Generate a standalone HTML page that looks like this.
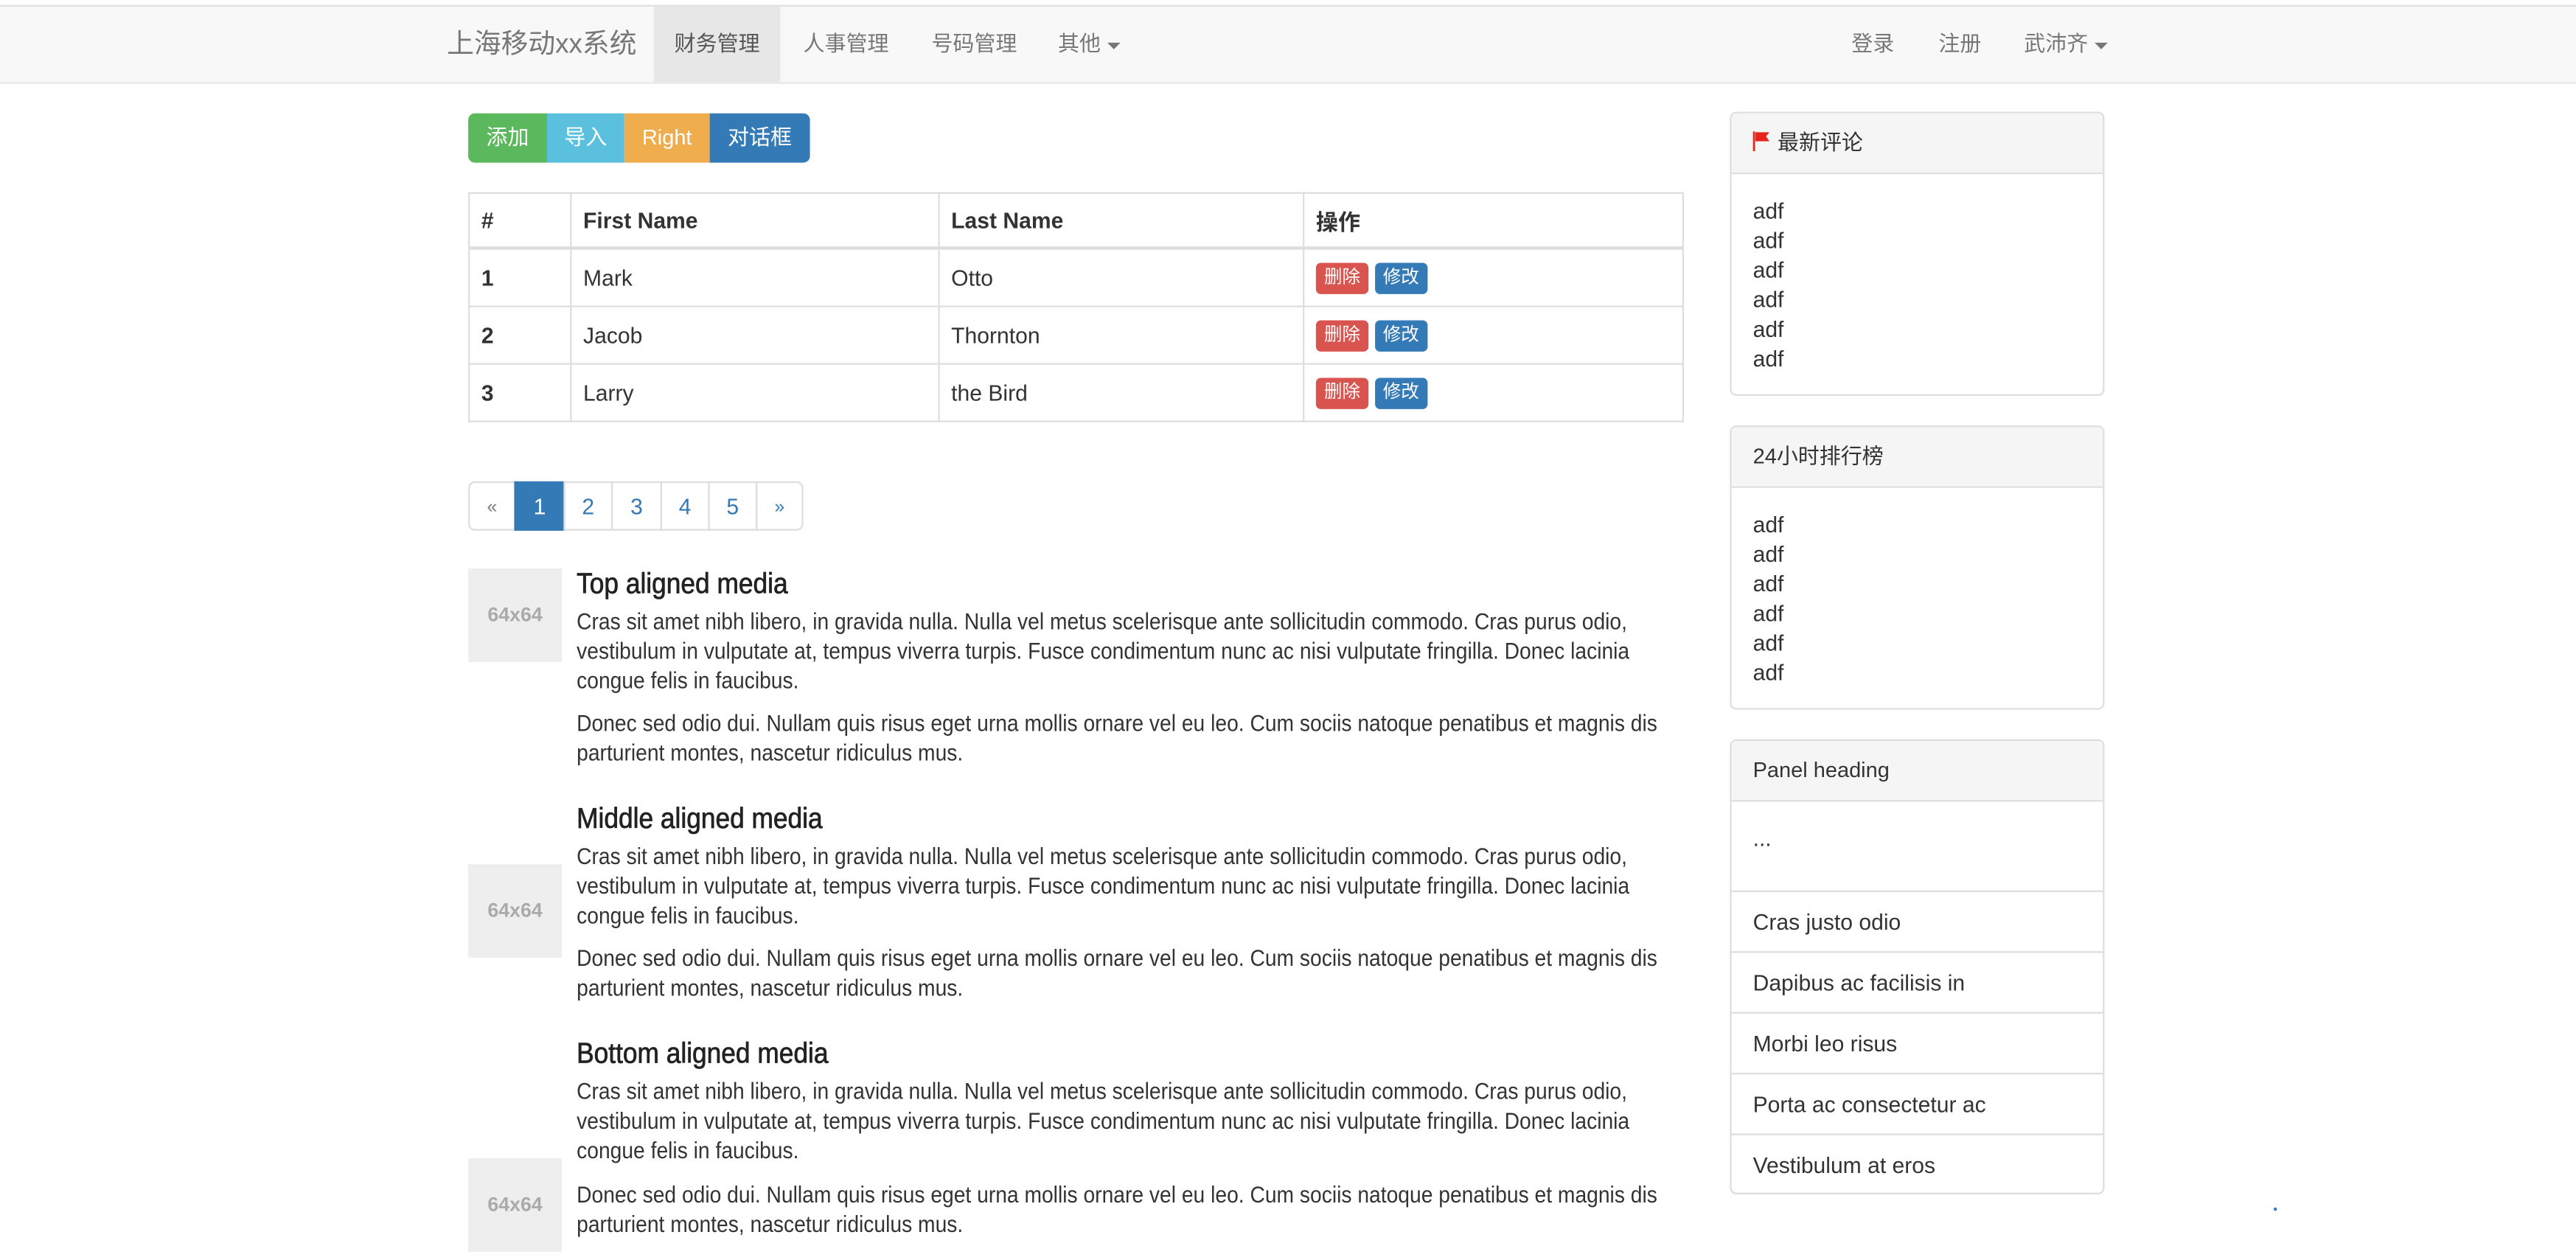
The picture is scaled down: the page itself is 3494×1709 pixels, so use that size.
<!DOCTYPE html>
<html><head><meta charset="utf-8">
<style>
html,body{margin:0;padding:0;background:#fff;overflow:hidden;width:3494px;height:1708px}
#w{position:absolute;left:0;top:0;width:1568px;height:767px;transform:scale(2.2283);transform-origin:0 0;font-family:"Liberation Sans","Noto Sans CJK SC",sans-serif;font-size:14px;color:#333}
.a{position:absolute;white-space:nowrap}
.c{display:inline-block;transform:scaleX(.905);transform-origin:left center}
.nav{position:absolute;left:0;top:3px;width:1568px;height:46px;background:#f8f8f8;border-top:1px solid #e0e0e0;border-bottom:1px solid #e7e7e7}
.ni{position:absolute;top:0;height:46px;line-height:46px;color:#777;font-size:13px}
.caret{display:inline-block;width:0;height:0;border-left:4px solid transparent;border-right:4px solid transparent;border-top:4px solid #777;vertical-align:middle;margin-left:4px}
.btn{position:absolute;top:69px;height:30px;line-height:30px;color:#fff;text-align:center;font-size:13px}
table{position:absolute;left:285px;top:117px;width:740px;border-collapse:collapse}
td,th{border:1px solid #ddd;padding:0 7px;text-align:left;height:34px;font-size:13.5px}
th{border-bottom:2px solid #ddd;height:32px}
.sb{display:inline-block;color:#fff;font-size:11px;height:19px;line-height:19px;padding:0 5px;border-radius:3px;vertical-align:middle}
.pg{position:absolute;top:293px;height:30px;line-height:30px;text-align:center;color:#337ab7;border:1px solid #ddd;box-sizing:border-box;font-size:13.5px}
.img{position:absolute;left:285px;width:57px;height:57px;background:#eee;color:#aaa;font-weight:bold;font-size:12px;text-align:center;line-height:57px}
.h{position:absolute;left:351px;font-size:17.5px;color:#222;white-space:nowrap;-webkit-text-stroke:0.35px #222}
.p{position:absolute;left:351px;line-height:18px;white-space:nowrap;font-size:14px}
.panel{position:absolute;left:1053px;width:228px;border:1px solid #ddd;border-radius:4px;box-sizing:border-box;background:#fff;font-size:13.5px}
.ph{height:36px;line-height:36px;background:#f5f5f5;border-bottom:1px solid #ddd;padding-left:13px;border-radius:4px 4px 0 0;font-size:13px}
.li{height:37px;line-height:37px;border-top:1px solid #ddd;padding-left:13px;box-sizing:border-box}
</style></head><body><div id="w">
<div class="nav">
 <div class="ni" style="left:272px;font-size:16.5px">上海移动xx系统</div>
 <div class="ni" style="left:398px;width:77px;background:#e7e7e7;color:#555;text-align:center">财务管理</div>
 <div class="ni" style="left:489px">人事管理</div>
 <div class="ni" style="left:567px">号码管理</div>
 <div class="ni" style="left:644px">其他<span class="caret"></span></div>
 <div class="ni" style="left:1127px">登录</div>
 <div class="ni" style="left:1180px">注册</div>
 <div class="ni" style="left:1232px">武沛齐<span class="caret"></span></div>
</div>
<div class="btn" style="left:285px;width:48px;background:#5cb85c;border-radius:4px 0 0 4px">添加</div>
<div class="btn" style="left:333px;width:47px;background:#5bc0de">导入</div>
<div class="btn" style="left:380px;width:52px;background:#f0ad4e">Right</div>
<div class="btn" style="left:432px;width:61px;background:#337ab7;border-radius:0 4px 4px 0">对话框</div>
<table>
<tr><th style="width:47px">#</th><th style="width:209px">First Name</th><th style="width:207px">Last Name</th><th>操作</th></tr>
<tr><td><b>1</b></td><td>Mark</td><td>Otto</td><td><span class="sb" style="background:#d9534f">删除</span> <span class="sb" style="background:#337ab7">修改</span></td></tr>
<tr><td><b>2</b></td><td>Jacob</td><td>Thornton</td><td><span class="sb" style="background:#d9534f">删除</span> <span class="sb" style="background:#337ab7">修改</span></td></tr>
<tr><td><b>3</b></td><td>Larry</td><td>the Bird</td><td><span class="sb" style="background:#d9534f">删除</span> <span class="sb" style="background:#337ab7">修改</span></td></tr>
</table>
<div class="pg" style="left:285px;width:29px;border-radius:4px 0 0 4px;color:#777;font-size:11px">«</div>
<div class="pg" style="left:313px;width:31px;background:#337ab7;border-color:#337ab7;color:#fff">1</div>
<div class="pg" style="left:343px;width:30px">2</div>
<div class="pg" style="left:372px;width:31px">3</div>
<div class="pg" style="left:402px;width:30px">4</div>
<div class="pg" style="left:431px;width:30px">5</div>
<div class="pg" style="left:460px;width:29px;border-radius:0 4px 4px 0;font-size:11px">»</div>

<div class="img" style="top:346px">64x64</div>
<div class="h" style="top:345px"><span class="c">Top aligned media</span></div>
<div class="p" style="top:369px"><span class="c">Cras sit amet nibh libero, in gravida nulla. Nulla vel metus scelerisque ante sollicitudin commodo. Cras purus odio,</span><br><span class="c">vestibulum in vulputate at, tempus viverra turpis. Fusce condimentum nunc ac nisi vulputate fringilla. Donec lacinia</span><br><span class="c">congue felis in faucibus.</span></div>
<div class="p" style="top:431px"><span class="c">Donec sed odio dui. Nullam quis risus eget urna mollis ornare vel eu leo. Cum sociis natoque penatibus et magnis dis</span><br><span class="c">parturient montes, nascetur ridiculus mus.</span></div>

<div class="img" style="top:526px">64x64</div>
<div class="h" style="top:488px"><span class="c">Middle aligned media</span></div>
<div class="p" style="top:512px"><span class="c">Cras sit amet nibh libero, in gravida nulla. Nulla vel metus scelerisque ante sollicitudin commodo. Cras purus odio,</span><br><span class="c">vestibulum in vulputate at, tempus viverra turpis. Fusce condimentum nunc ac nisi vulputate fringilla. Donec lacinia</span><br><span class="c">congue felis in faucibus.</span></div>
<div class="p" style="top:574px"><span class="c">Donec sed odio dui. Nullam quis risus eget urna mollis ornare vel eu leo. Cum sociis natoque penatibus et magnis dis</span><br><span class="c">parturient montes, nascetur ridiculus mus.</span></div>

<div class="img" style="top:705px">64x64</div>
<div class="h" style="top:631px"><span class="c">Bottom aligned media</span></div>
<div class="p" style="top:655px"><span class="c">Cras sit amet nibh libero, in gravida nulla. Nulla vel metus scelerisque ante sollicitudin commodo. Cras purus odio,</span><br><span class="c">vestibulum in vulputate at, tempus viverra turpis. Fusce condimentum nunc ac nisi vulputate fringilla. Donec lacinia</span><br><span class="c">congue felis in faucibus.</span></div>
<div class="p" style="top:718px"><span class="c">Donec sed odio dui. Nullam quis risus eget urna mollis ornare vel eu leo. Cum sociis natoque penatibus et magnis dis</span><br><span class="c">parturient montes, nascetur ridiculus mus.</span></div>

<div class="panel" style="top:68px;height:173px">
 <div class="ph"><svg width="11" height="12" viewBox="0 0 11 12" style="vertical-align:-1px;margin-right:4px"><rect x="0" y="0" width="1.3" height="12" fill="#e8251c"/><path d="M1.5 0.5 H10 L8 3 L10 6 H1.5Z" fill="#e8251c"/></svg>最新评论</div>
 <div style="padding:14px 13px;line-height:18px">adf<br>adf<br>adf<br>adf<br>adf<br>adf</div>
</div>
<div class="panel" style="top:259px;height:173px">
 <div class="ph">24小时排行榜</div>
 <div style="padding:14px 13px;line-height:18px">adf<br>adf<br>adf<br>adf<br>adf<br>adf</div>
</div>
<div class="panel" style="top:450px;height:277px">
 <div class="ph">Panel heading</div>
 <div style="height:54px;line-height:46px;padding-left:13px">...</div>
 <div class="li">Cras justo odio</div>
 <div class="li">Dapibus ac facilisis in</div>
 <div class="li">Morbi leo risus</div>
 <div class="li">Porta ac consectetur ac</div>
 <div class="li">Vestibulum at eros</div>
</div>
<div style="position:absolute;left:1384px;top:735px;width:2px;height:2px;background:#2a7ae2;border-radius:1px"></div>
</div></body></html>
